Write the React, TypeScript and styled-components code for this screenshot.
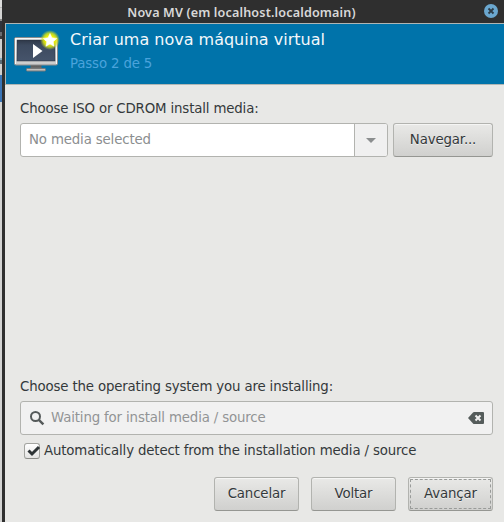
import React from "react";
import styled, { createGlobalStyle, css } from "styled-components";

const GlobalStyle = createGlobalStyle`
  * { box-sizing: border-box; }
  body {
    margin: 0;
    overflow: hidden;
    background: #2f2f2f;
    color: #34393b;
    font: 13.33px/16px "DejaVu Sans", sans-serif;
    letter-spacing: -0.15px;
  }
  button, input { font: inherit; letter-spacing: inherit; color: inherit; }
`;

const Desktop = styled.div`
  display: flex;
  width: 504px;
  height: 522px;
`;

const WindowBehind = styled.div`
  flex: 0 0 2px;
  background: linear-gradient(
    #dcdcdb 0 7px, #b9b9b8 7px 8px, #d4d4d3 8px 19px, #8b8b8a 19px 21px, #30343c 21px 32px,
    #6a6c70 32px 36px, #3c3c3c 36px 39px, #d0d0cf 39px 58px, #8eb0c0 58px 60px, #5b6d78 60px 64px,
    #d0d0cf 64px 75px, #3a74b5 75px 102px, #d3d3d2 102px
  );
`;

const Dialog = styled.main`
  flex: 1;
  display: flex;
  flex-direction: column;
  background: #2f2f2f;
`;

const TitleBar = styled.header`
  flex: 0 0 23px;
  display: grid;
  grid-template-columns: 24px 1fr 24px;
  align-items: center;
`;

const WindowTitle = styled.h1`
  grid-column: 2;
  margin: 3px 0 0 -23px;
  text-align: center;
  white-space: nowrap;
  color: #d8d8d8;
  font: 600 12.6px/18px "Noto Sans", sans-serif;
  letter-spacing: 0.15px;
`;

const CloseButton = styled.button`
  width: 14px;
  height: 14px;
  margin: -1px 0 0 4px;
  padding: 0;
  border: 0;
  background: none;
  svg { display: block; }
`;

const Frame = styled.div`
  flex: 1;
  display: flex;
  flex-direction: column;
  margin-left: 3px;
  background: #e8e8e6;
`;

const Banner = styled.section`
  flex: 0 0 62px;
  display: flex;
  background: #0073aa;
  border: 1px solid #b0b6b4;
  border-width: 1px 0 1px 1px;
`;

const BannerIcon = styled.svg`
  width: 48px;
  height: 48px;
  margin: 5px 0 0 7px;
`;

const BannerText = styled.div`
  margin: 6px 0 0 9px;
  white-space: nowrap;
`;

const Heading = styled.h2`
  margin: 0;
  color: #f4f8fb;
  font: 400 16px/20px "DejaVu Sans", sans-serif;
  letter-spacing: 0;
`;

const Step = styled.p`
  margin: 6px 0 0;
  color: #4ba3dc;
`;

const Content = styled.form`
  flex: 1;
  display: flex;
  flex-direction: column;
  padding: 16px 11px 11px 15px;
`;

const Label = styled.label`
  height: 16px;
  margin-bottom: 6px;
  white-space: nowrap;
`;

const Row = styled.div`
  display: flex;
  gap: 5px;
`;

const fieldFrame = css`
  display: flex;
  height: 34px;
  border: 1px solid #b2b3af;
  border-radius: 3px;
  overflow: hidden;
`;

const Combo = styled.div`
  ${fieldFrame}
  flex: 0 0 368px;
  background: #fff;
`;

const TextInput = styled.input`
  flex: 1;
  min-width: 0;
  padding: 0 8px;
  border: 0;
  outline: 0;
  background: transparent;
  &::placeholder { color: #8b8e8f; opacity: 1; }
`;

const Arrow = styled.button`
  flex: 0 0 33px;
  display: flex;
  align-items: center;
  justify-content: center;
  padding: 0;
  border: 0;
  border-left: 1px solid #b2b3af;
  background: #f0f0f0;
`;

const Button = styled.button<{ $width: number; $focused?: boolean }>`
  width: ${(p) => p.$width}px;
  height: 34px;
  padding: 0 0 1px;
  border: 1px solid #b2b3af;
  border-bottom-color: #959692;
  border-radius: 3px;
  background: linear-gradient(#e9e9e7, #d0d0ce);
  box-shadow: inset 0 1px #f5f5f4;
  text-shadow: 0 1px rgba(255, 255, 255, 0.6);
  white-space: nowrap;
  ${(p) => p.$focused && css`
    outline: 1px dashed #999b99;
    outline-offset: -3px;
  `}
`;

const SystemSection = styled.section`
  display: flex;
  flex-direction: column;
  margin-top: auto;
`;

const Search = styled.div`
  ${fieldFrame}
  align-items: center;
  padding: 0 8px;
  background: #f1f1f1;
  svg { flex: none; }
`;

const SearchInput = styled(TextInput)`
  padding: 0 6px;
  &::placeholder { color: #929495; }
`;

const CheckRow = styled.label`
  display: flex;
  align-items: center;
  gap: 4px;
  height: 16px;
  margin: 8px 0 18px 4px;
  white-space: nowrap;
`;

const CheckBox = styled.span`
  flex: none;
  width: 16px;
  height: 16px;
  border: 1px solid #a3a4a0;
  border-bottom-color: #8b8c88;
  border-radius: 3px;
  background: linear-gradient(#fff, #e4e4e3);
  svg { display: block; overflow: visible; }
`;

const Actions = styled.footer`
  display: flex;
  justify-content: flex-end;
  gap: 12px;
`;

function MachineIcon() {
  return (
    <BannerIcon viewBox="0 0 48 48">
      <defs>
        <linearGradient id="bezel" x2="0" y2="1"><stop stopColor="#fff" /><stop offset="1" stopColor="#c9c9c9" /></linearGradient>
        <linearGradient id="screen" x2="0" y2="1"><stop stopColor="#2e3848" /><stop offset=".25" stopColor="#3d4a5f" /><stop offset="1" stopColor="#46546b" /></linearGradient>
        <linearGradient id="stand" x2="0" y2="1"><stop stopColor="#555" /><stop offset="1" stopColor="#777" /></linearGradient>
        <radialGradient id="glow"><stop offset=".45" stopColor="#f2f300" /><stop offset=".7" stopColor="#d9e416" stopOpacity=".8" /><stop offset="1" stopColor="#b4d040" stopOpacity="0" /></radialGradient>
      </defs>
      <path d="M17.500 36h11v4h-11z" fill="url(#stand)" />
      <rect x="13.500" y="39.500" width="19" height="2.500" rx=".8" fill="#c0c0be" stroke="#77797a" />
      <rect x="1.500" y="8.500" width="43" height="27.500" rx="1.500" fill="url(#bezel)" stroke="#8b8d8e" />
      <path d="M2.500 35V9.500h41V35" fill="none" stroke="#f7f7f7" />
      <rect x="4" y="11" width="38" height="21" fill="url(#screen)" stroke="#29313f" strokeWidth=".5" />
      <path d="M20 15v14l9.500-7z" fill="#fff" />
      <circle cx="37" cy="11" r="10" fill="url(#glow)" />
      <path d="m37 4.500 2 4.200 4.700.7-3.400 3.300.8 4.600-4.100-2.200-4.100 2.200.8-4.600-3.400-3.300 4.700-.7z" fill="#fff" stroke="#fff" strokeWidth=".5" />
    </BannerIcon>
  );
}

export default function App() {
  return (
    <>
      <GlobalStyle />
      <Desktop>
        <WindowBehind />
        <Dialog>
          <TitleBar>
            <WindowTitle>Nova MV (em localhost.localdomain)</WindowTitle>
            <CloseButton type="button" aria-label="Fechar">
              <svg width="14" height="14" viewBox="0 0 14 14">
                <circle cx="7" cy="7" r="7" fill="#6ba7cf" />
                <path d="m4.500 4.500 5 5m0-5-5 5" stroke="#2d3b46" strokeWidth="1.800" />
              </svg>
            </CloseButton>
          </TitleBar>
          <Frame>
            <Banner>
              <MachineIcon />
              <BannerText>
                <Heading>Criar uma nova máquina virtual</Heading>
                <Step>Passo 2 de 5</Step>
              </BannerText>
            </Banner>
            <Content>
              <Label htmlFor="media">Choose ISO or CDROM install media:</Label>
              <Row>
                <Combo>
                  <TextInput id="media" placeholder="No media selected" />
                  <Arrow type="button" aria-label="Abrir lista">
                    <svg width="10" height="5" viewBox="0 0 10 5"><path d="M0 0h10L5 5z" fill="#8b8e8f" /></svg>
                  </Arrow>
                </Combo>
                <Button type="button" $width={100}>Navegar...</Button>
              </Row>
              <SystemSection>
                <Label htmlFor="system">Choose the operating system you are installing:</Label>
                <Search>
                  <svg width="16" height="16" viewBox="0 0 16 16" fill="none" stroke="#555a5a">
                    <circle cx="6.500" cy="6.500" r="4.500" strokeWidth="2" />
                    <path d="m9.800 9.800 4.600 4.600" strokeWidth="2.400" />
                  </svg>
                  <SearchInput id="system" placeholder="Waiting for install media / source" />
                  <svg width="16" height="12" viewBox="0 0 16 12">
                    <path d="M0 6 5 .5Q5.500 0 6 0h9q1 0 1 1v10q0 1-1 1H6q-.5 0-1-.5z" fill="#555c5b" />
                    <path d="m7.500 3.500 5 5m0-5-5 5" stroke="#f1f1f1" strokeWidth="2" />
                  </svg>
                </Search>
                <CheckRow>
                  <CheckBox>
                    <svg width="14" height="14" viewBox="0 0 14 14"><path d="m3.500 6.500 3.500 3.500L14 3" fill="none" stroke="#2e3436" strokeWidth="3" /></svg>
                  </CheckBox>
                  Automatically detect from the installation media / source
                </CheckRow>
              </SystemSection>
              <Actions>
                <Button type="button" $width={85}>Cancelar</Button>
                <Button type="button" $width={85}>Voltar</Button>
                <Button type="button" $width={85} $focused>Avançar</Button>
              </Actions>
            </Content>
          </Frame>
        </Dialog>
      </Desktop>
    </>
  );
}
